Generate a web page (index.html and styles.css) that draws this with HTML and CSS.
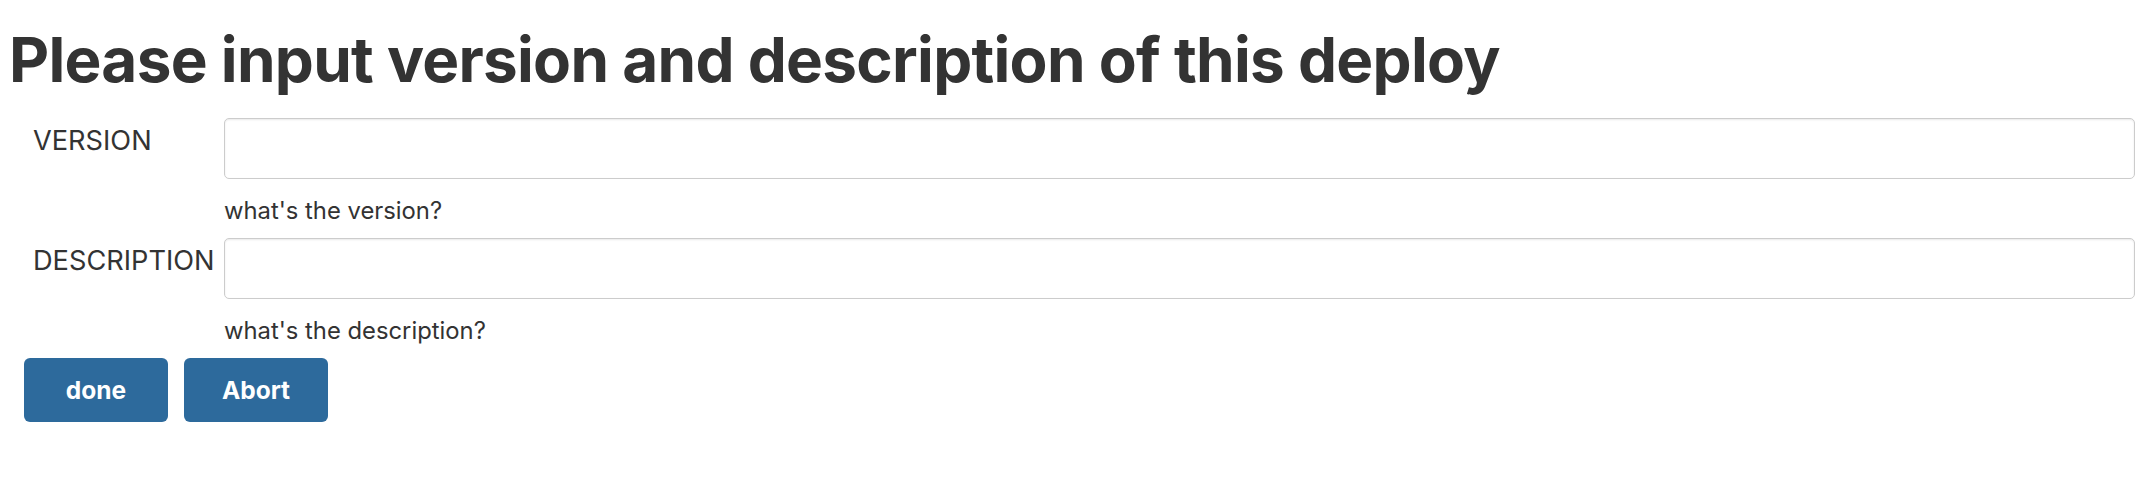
FILE: index.html
```html
<!DOCTYPE html>
<html>
<head>
<meta charset="utf-8">
<title>Deploy</title>
<link rel="stylesheet" href="styles.css">
</head>
<body>
<div class="page">
  <h1 class="title">Please input version and description of this deploy</h1>
  <form class="form">
    <div class="group">
      <div class="row">
        <label class="label" for="version">VERSION</label>
        <input class="input" id="version" type="text">
      </div>
      <div class="help">what's the version?</div>
    </div>
    <div class="group">
      <div class="row">
        <label class="label" for="description">DESCRIPTION</label>
        <input class="input" id="description" type="text">
      </div>
      <div class="help">what's the description?</div>
    </div>
    <div class="actions">
      <button class="btn" type="button">done</button>
      <button class="btn" type="button">Abort</button>
    </div>
  </form>
</div>
</body>
</html>
```
FILE: styles.css
```css
* { box-sizing: border-box; }
html, body { margin: 0; padding: 0; background: #fff; }
body {
  font-family: Inter, "Liberation Sans", sans-serif;
  color: #333;
}
.page {
  padding: 29px 17px 0 9px;
}
.title {
  margin: 0;
  font-size: 62px;
  line-height: 62px;
  font-weight: 700;
  letter-spacing: -0.72px;
  color: #333;
}
.form {
  margin-top: 27px;
}
.group {
  margin-bottom: 14px;
}
.row {
  display: flex;
  align-items: flex-start;
}
.label {
  width: 215px;
  flex: none;
  padding-left: 24px;
  padding-top: 7px;
  font-size: 27.2px;
  line-height: 31px;
  font-weight: 400;
  color: #333;
}
.input {
  flex: 1;
  height: 61px;
  border: 1px solid #ccc;
  border-radius: 5px;
  box-shadow: inset 0 1px 2px rgba(0,0,0,0.09);
  background: #fff;
  font: inherit;
  font-size: 22px;
  padding: 0 16px;
  outline: none;
}
.help {
  margin-top: 18px;
  margin-left: 215px;
  font-size: 23.8px;
  line-height: 27px;
  color: #333;
}
.actions {
  display: flex;
  gap: 16px;
  padding-left: 15px;
}
.btn {
  min-width: 144px;
  height: 64px;
  border: none;
  border-radius: 6px;
  background: #2d6a9c;
  color: #fff;
  font-family: Inter, "Liberation Sans", sans-serif;
  font-size: 24.5px;
  font-weight: 700;
  padding: 0 20px;
  cursor: pointer;
}
```
